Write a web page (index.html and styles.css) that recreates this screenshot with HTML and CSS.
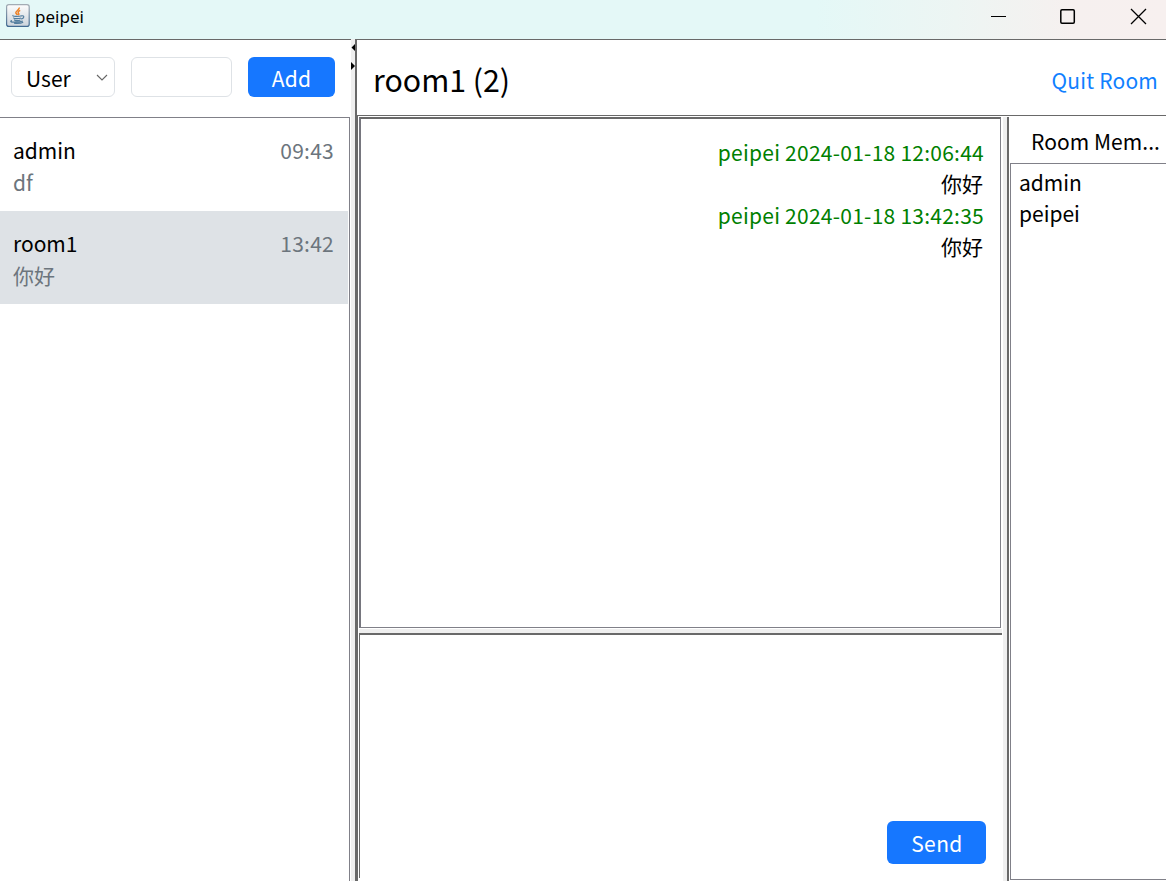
FILE: index.html
```
<!DOCTYPE html>
<html lang="en">
<head>
<meta charset="utf-8">
<title>peipei</title>
<link rel="stylesheet" href="styles.css">
</head>
<body>
<div class="window">
  <header class="titlebar">
    <svg class="app-icon" width="24" height="24" viewBox="0 0 24 24" fill="none">
      <defs>
        <linearGradient id="tile" x1="0" y1="0" x2="0" y2="1"><stop offset="0" stop-color="#fdfdfd"/><stop offset="1" stop-color="#cbd3db"/></linearGradient>
        <linearGradient id="edge" x1="0" y1="0" x2="0" y2="1"><stop offset="0" stop-color="#a3acb4"/><stop offset="1" stop-color="#426a92"/></linearGradient>
      </defs>
      <rect x=".6" y=".6" width="22.6" height="21.8" rx="2.2" fill="url(#tile)" stroke="url(#edge)" stroke-width="1.2"/>
      <path d="M13.2 3.6c.8 2.3-3.9 3.3-3.4 5.2.2.8 1.3 1.3 1.6 2.2M14.2 6.4c-2.8 1.3-2.3 2.3-1.4 3.3.3.6 0 1-.5 1.4" stroke="#ee8125" stroke-width="1.5"/>
      <path d="M7.4 11.4c-2.6 1 5.3 1.3 8.2.3M7.8 13.6c-.9 1.3 4.8 1.4 7.2.4M8.6 15.6c-.8 1.3 4 1.4 5.8.4M15.6 11.8c3.4-.6 2.5 2.8-.7 3.2M6 16.6c-5 1.7 6 2.2 10.8.4M8 19.2c3.2.4 7 .2 9.2-1" stroke="#527d9e" stroke-width="1.2"/>
    </svg>
    <span class="app-title">peipei</span>
    <svg class="controls" width="176" height="39" viewBox="990 0 176 39" fill="none" stroke="#000">
      <path d="M991 16.5h15"/>
      <rect x="1060.8" y="9.8" width="13.5" height="13.5" rx="1.2" stroke-width="1.5"/>
      <path d="M1131 9l15 15M1146 9l-15 15" stroke-width="1.3"/>
    </svg>
  </header>
  <div class="body">
    <aside class="sidebar">
      <div class="toolbar">
        <div class="select"><span>User</span>
          <svg width="12" height="8" viewBox="0 0 12 8" fill="none" stroke="#666" stroke-width="1.1"><path d="M1 1l5 5 5-5"/></svg>
        </div>
        <div class="field"></div>
        <div class="button add">Add</div>
      </div>
      <div class="chats">
        <div class="chat">
          <div class="row"><span>admin</span><span class="muted time">09:43</span></div>
          <div class="muted">df</div>
        </div>
        <div class="chat selected">
          <div class="row"><span>room1</span><span class="muted time">13:42</span></div>
          <div class="muted">你好</div>
        </div>
      </div>
    </aside>
    <div class="divider">
      <svg width="4" height="34" viewBox="0 0 4 34"><path d="M4 5v7L.5 8.5zM0 23v8L4 27z" fill="#000"/></svg>
    </div>
    <main class="main">
      <div class="room-head"><span class="room-name">room1 (2)</span><span class="quit">Quit Room</span></div>
      <div class="room">
        <div class="conversation">
          <div class="messages">
            <div class="meta">peipei 2024-01-18 12:06:44</div>
            <div class="text">你好</div>
            <div class="meta">peipei 2024-01-18 13:42:35</div>
            <div class="text">你好</div>
          </div>
          <div class="split"></div>
          <div class="compose"><div class="button send">Send</div></div>
        </div>
        <div class="members-divider"></div>
        <div class="members">
          <div class="members-title">Room Mem...</div>
          <div class="members-list"><div>admin</div><div>peipei</div></div>
        </div>
      </div>
    </main>
  </div>
</div>
</body>
</html>
```
FILE: styles.css
```
* { box-sizing: border-box; }
body {
  margin: 0;
  overflow: hidden;
  background: #fff;
  color: #000;
  font: 21px/31px "Noto Sans CJK SC", sans-serif;
}
.window { width: 1166px; height: 881px; display: flex; flex-direction: column; }
.titlebar {
  height: 39px;
  flex: none;
  display: flex;
  align-items: flex-start;
  background: linear-gradient(90deg, #e4f8f7 0, #e4f8f7 70%, #edf5f3 82%, #f6f0ef 92%, #f7f0ef 100%);
}
.app-icon { margin: 4px 0 0 6px; }
.app-title { margin: 2px 0 0 5px; font: 17px/29px "Noto Sans", sans-serif; }
.controls { margin-left: auto; }
.body { flex: 1; min-height: 0; display: flex; }
.sidebar { width: 351px; display: flex; flex-direction: column; border-top: 1px solid #696969; }
.toolbar { height: 77px; flex: none; display: flex; align-items: flex-start; padding: 17px 0 0 11px; }
.select, .field { height: 40px; border: 1px solid #dee2e6; border-radius: 6px; }
.select {
  width: 104px;
  display: flex;
  align-items: center;
  justify-content: space-between;
  padding: 2px 6px 0 14px;
}
.select svg { margin-top: 0; }
.field { width: 101px; margin: 0 16px; }
.button { background: #1677ff; color: #fff; border-radius: 6px; text-align: center; letter-spacing: .3px; }
.add { width: 87px; height: 40px; line-height: 43px; }
.chats { flex: 1; width: 350px; border: solid #808088; border-width: 1px 1px 0 0; }
.chat { width: 348px; height: 93px; padding: 16px 14px 0 13px; line-height: 32px; }
.selected { background: #dee2e6; }
.row { display: flex; justify-content: space-between; }
.muted { color: #6c757d; }
.time { letter-spacing: .25px; }
.divider { width: 4px; background: #efefef; }
.divider svg { display: block; }
.main { flex: 1; min-width: 0; display: flex; flex-direction: column; border-left: 2px solid #696969; }
.room-head {
  height: 77px;
  flex: none;
  display: flex;
  align-items: center;
  justify-content: space-between;
  border: solid #696969;
  border-width: 1px 0;
  padding: 5px 8px 0 16px;
}
.room-name { font-size: 30.3px; line-height: 40px; padding-bottom: 3px; }
.room { flex: 1; min-height: 0; display: flex; padding-top: 1px; border-left: 1px solid #696969; }
.conversation { width: 645px; padding-left: 1px; display: flex; flex-direction: column; }
.messages {
  width: 642px;
  height: 511px;
  padding: 17px 16px 0 0;
  text-align: right;
  border: 1px solid #808088;
  border-top: 2px solid #696969;
  border-left: 2px solid #76767e;
}
.meta { color: #008000; line-height: 32px; letter-spacing: .25px; }
.text { padding-right: 1px; }
.split { height: 6px; margin-top: 1px; width: 643px; background: #efefef; border-bottom: 2px solid #696969; }
.compose {
  width: 643px;
  height: 243px;
  border-left: 1px solid #696969;
  display: flex;
  align-items: flex-end;
  justify-content: flex-end;
  padding: 0 16px 14px 0;
}
.send { width: 99px; height: 43px; line-height: 45px; padding-left: 1px; letter-spacing: .4px; }
.members-divider { width: 6px; background: #efefef; border-right: 2px solid #696969; }
.members { flex: 1; min-width: 0; padding-left: 1px; display: flex; flex-direction: column; }
.members-title { height: 46px; padding-left: 21px; line-height: 48px; white-space: nowrap; letter-spacing: .05px; }
.members-list { height: 717px; padding: 3px 0 0 8px; border: solid #808088; border-width: 1px 0 1px 1px; }
.quit { color: #1080ff; letter-spacing: .2px; padding-top: 1px; }
```
